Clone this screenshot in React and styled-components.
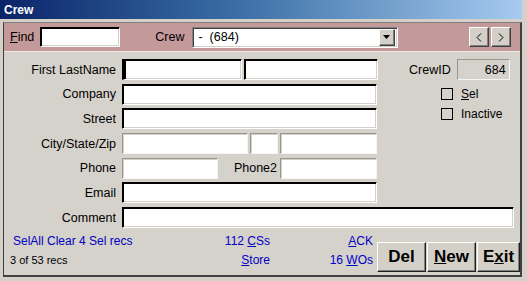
import styled, { createGlobalStyle } from "styled-components";

const Global = createGlobalStyle`
  html, body {
    margin: 0;
    padding: 0;
    background: #d4d0c8;
  }
  * { box-sizing: border-box; }
`;

const Window = styled.div`
  width: 522px;
  height: 281px;
  display: flex;
  flex-direction: column;
  font-family: "Liberation Sans", Arial, sans-serif;
  font-size: 12.5px;
  color: #000;
  padding-bottom: 4px;
`;

const TitleBar = styled.div`
  height: 19px;
  flex: none;
  display: flex;
  align-items: center;
  padding-left: 4px;
  background: linear-gradient(to right, #0a246a 0%, #3a6ea5 45%, #a6caf0 100%);
  color: #fff;
  font-weight: bold;
  font-size: 12px;
`;

const Form = styled.div`
  flex: 1;
  margin: 3px 0 0 3px;
  display: flex;
  flex-direction: column;
  border-left: 1px solid #404040;
  border-top: 1px solid #808080;
  border-right: 2px solid #404040;
  border-bottom: 2px solid #404040;
  background: #d5d1cb;
`;

const Header = styled.div`
  height: 29px;
  flex: none;
  display: flex;
  align-items: center;
  padding: 0 9px 0 6px;
  background: #c49999;
  border-bottom: 1px solid #ece9e4;
`;

const HeaderLabel = styled.span`
  margin-right: ${(p) => p.$gap}px;
  margin-left: ${(p) => p.$left || 0}px;
`;

const Field = styled.input`
  width: ${(p) => p.$w}px;
  height: ${(p) => p.$h || 21}px;
  flex: none;
  margin: 0;
  padding: 0 3px;
  font: inherit;
  background: ${(p) => (p.$disabled ? "#d5d1cb" : "#fff")};
  text-align: ${(p) => (p.$right ? "right" : "left")};
  outline: none;
  border: 1px solid;
  border-color: ${(p) =>
    p.$flat ? "#9a968f #f6f5f3 #f6f5f3 #9a968f" : "#000 #fff #fff #000"};
  box-shadow: ${(p) =>
    p.$flat
      ? "inset 1px 1px 0 #d4d0c8"
      : "inset 1px 1px 0 #000, inset -1px -1px 0 #d4d0c8"};
  ${(p) => p.$caret && "border-left: 3px solid #000;"}
`;

const Combo = styled.div`
  width: 206px;
  height: 21px;
  display: flex;
  align-items: center;
  background: #fff;
  border: 1px solid;
  border-color: #808080 #fff #fff #808080;
  box-shadow: inset 1px 1px 0 #404040, inset -1px -1px 0 #d4d0c8;
  padding: 0 2px 0 6px;
`;

const ComboText = styled.span`
  flex: 1;
  white-space: pre;
`;

const DropButton = styled.div`
  width: 16px;
  height: 17px;
  display: flex;
  align-items: center;
  justify-content: center;
  background: #d4d0c8;
  border: 1px solid;
  border-color: #fff #404040 #404040 #fff;
  box-shadow: inset -1px -1px 0 #808080;
`;

const Spacer = styled.div`
  flex: 1;
`;

const NavGroup = styled.div`
  display: flex;
  gap: 2px;
`;

const NavButton = styled.div`
  width: 20px;
  height: 20px;
  display: flex;
  align-items: center;
  justify-content: center;
  background: #d4d0c8;
  border: 1px solid;
  border-color: #fff #404040 #404040 #fff;
  box-shadow: inset -1px -1px 0 #808080;
`;

const Body = styled.div`
  flex: 1;
  display: flex;
  flex-direction: column;
  padding-top: 7px;
`;

const Top = styled.div`
  display: flex;
`;

const Fields = styled.div`
  display: flex;
  flex-direction: column;
  gap: 3.7px;
`;

const Row = styled.div`
  display: flex;
  align-items: center;
  gap: ${(p) => p.$gap ?? 2}px;
`;

const Label = styled.label`
  width: ${(p) => p.$w || 112}px;
  flex: none;
  text-align: right;
  margin-right: ${(p) => p.$mr ?? 4}px;
  white-space: nowrap;
`;

const Side = styled.div`
  flex: 1;
  display: flex;
  flex-direction: column;
  padding-left: 31px;
`;

const IdRow = styled.div`
  display: flex;
  align-items: center;
  gap: 6px;
`;

const CheckRow = styled.div`
  display: flex;
  align-items: center;
  gap: 8px;
  margin-left: 32px;
  margin-top: ${(p) => p.$mt}px;
  font-size: 12px;
`;

const Box = styled.span`
  width: 12px;
  height: 12px;
  border: 1px solid #000;
`;

const CommentRow = styled(Row)`
  margin-top: 4px;
`;

const Footer = styled.div`
  display: flex;
  margin-top: 6px;
`;

const Links = styled.div`
  width: 369px;
  display: grid;
  grid-template-columns: 1fr auto 103px;
  grid-template-rows: 14px 14px;
  row-gap: 5px;
  padding-left: 9px;
  font-size: 12px;
  color: #0000c4;
  line-height: 14px;
`;

const Cell = styled.span`
  justify-self: ${(p) => (p.$end ? "end" : "start")};
  white-space: pre;
  ${(p) => p.$note && "color: #000; font-size: 11px; margin-left: -3px;"}
`;

const Buttons = styled.div`
  display: flex;
  gap: 1px;
  margin: 8px 0 0 4px;
`;

const Button = styled.div`
  width: ${(p) => p.$w}px;
  height: 30px;
  display: flex;
  align-items: center;
  justify-content: center;
  font-size: 17px;
  font-weight: bold;
  background: #d4d0c8;
  border: 1px solid;
  border-color: #fff #202020 #202020 #fff;
  box-shadow: inset -1px -1px 0 #808080;
`;

export default function App() {
  return (
    <>
      <Global />
      <Window>
        <TitleBar>Crew</TitleBar>
        <Form>
          <Header>
            <HeaderLabel $gap={6}>
              <u>F</u>ind
            </HeaderLabel>
            <Field $w={80} $h={20} />
            <HeaderLabel $left={35} $gap={7}>
              Crew
            </HeaderLabel>
            <Combo>
              <ComboText>-  (684)</ComboText>
              <DropButton>
                <svg width="7" height="4" viewBox="0 0 7 4">
                  <polygon points="0,0 7,0 3.5,4" fill="#000" />
                </svg>
              </DropButton>
            </Combo>
            <Spacer />
            <NavGroup>
              <NavButton>
                <svg width="6" height="9" viewBox="0 0 6 9">
                  <polyline points="5,0.5 1,4.5 5,8.5" fill="none" stroke="#000" />
                </svg>
              </NavButton>
              <NavButton>
                <svg width="6" height="9" viewBox="0 0 6 9">
                  <polyline points="1,0.5 5,4.5 1,8.5" fill="none" stroke="#000" />
                </svg>
              </NavButton>
            </NavGroup>
          </Header>
          <Body>
            <Top>
              <Fields>
                <Row>
                  <Label>First LastName</Label>
                  <Field $w={120} $caret />
                  <Field $w={134} />
                </Row>
                <Row>
                  <Label>Company</Label>
                  <Field $w={255} />
                </Row>
                <Row>
                  <Label>Street</Label>
                  <Field $w={255} />
                </Row>
                <Row>
                  <Label>City/State/Zip</Label>
                  <Field $w={126} $flat />
                  <Field $w={28} $flat />
                  <Field $w={97} $flat />
                </Row>
                <Row $gap={0}>
                  <Label $mr={6}>Phone</Label>
                  <Field $w={96} $flat />
                  <Label $w={59} $mr={3}>
                    Phone2
                  </Label>
                  <Field $w={97} $flat />
                </Row>
                <Row>
                  <Label>Email</Label>
                  <Field $w={255} />
                </Row>
              </Fields>
              <Side>
                <IdRow>
                  <span>CrewID</span>
                  <Field $w={53} $flat $disabled $right defaultValue="684" />
                </IdRow>
                <CheckRow $mt={7}>
                  <Box />
                  <span>
                    <u>S</u>el
                  </span>
                </CheckRow>
                <CheckRow $mt={6}>
                  <Box />
                  <span>Inactive</span>
                </CheckRow>
              </Side>
            </Top>
            <CommentRow>
              <Label>Comment</Label>
              <Field $w={392} />
            </CommentRow>
            <Footer>
              <Links>
                <Cell>SelAll Clear 4 Sel recs</Cell>
                <Cell $end>
                  112 <u>C</u>Ss
                </Cell>
                <Cell $end>
                  <u>A</u>CK
                </Cell>
                <Cell $note>3 of 53 recs</Cell>
                <Cell $end>
                  <u>S</u>tore
                </Cell>
                <Cell $end>
                  16 <u>W</u>Os
                </Cell>
              </Links>
              <Buttons>
                <Button $w={49}>Del</Button>
                <Button $w={49}>
                  <span>
                    <u>N</u>ew
                  </span>
                </Button>
                <Button $w={43}>
                  <span>
                    E<u>x</u>it
                  </span>
                </Button>
              </Buttons>
            </Footer>
          </Body>
        </Form>
      </Window>
    </>
  );
}
